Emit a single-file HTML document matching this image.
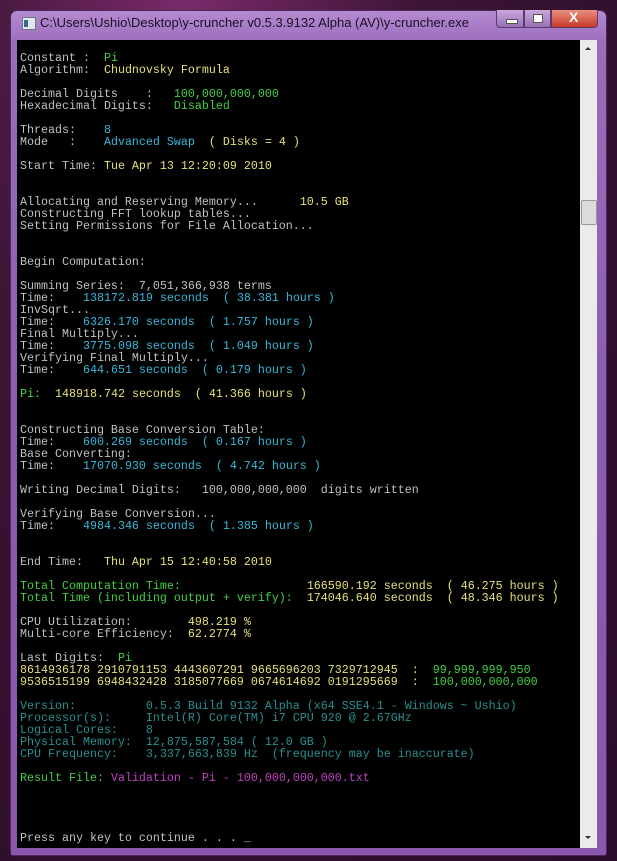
<!DOCTYPE html>
<html><head><meta charset="utf-8"><style>
html,body{margin:0;padding:0}
body{width:617px;height:861px;overflow:hidden;position:relative;background:radial-gradient(ellipse at 30% 0%,#7a2a6a 0%,#3a1434 40%,#2a0c28 100%)}
.win{position:absolute;left:10px;top:10px;width:597px;height:846px;border-radius:7px 7px 3px 3px;background:linear-gradient(180deg,#b48ad0 0%,#9a6cbc 4%,#8a5cae 50%,#8a56ae 100%);border:1px solid #4a2a5a;box-sizing:border-box}
.title{position:absolute;left:40px;top:15px;font:13px "Liberation Sans",sans-serif;color:#1a1024;white-space:nowrap}
.ico{position:absolute;left:22px;top:17px;width:12px;height:11px;background:#dfe7ee;border:1px solid #6a7a8a}
.ico:after{content:"";position:absolute;left:1px;top:2px;width:4px;height:7px;background:#3a6a8a}
.btn{position:absolute;top:10px;height:18px;border:1px solid #5a3a6a;border-top:none;box-sizing:border-box;background:linear-gradient(#c9a8dc,#9a70b8)}
.con{position:absolute;left:17px;top:40px;width:563px;height:808px;background:#000}
.sb{position:absolute;left:580px;top:40px;width:17px;height:808px;background:#ebebeb}
pre{position:absolute;left:20px;top:52px;margin:0;font:11.67px/12px "Liberation Mono",monospace;color:#c0c0c0}
.g{color:#44d044}.y{color:#e6e07a}.c{color:#38b8d8}.t{color:#2a9090}.m{color:#c040c0}.lg{color:#48c848}
</style></head><body>
<div class="win"></div>
<div class="ico"></div>
<div class="title">C:\Users\Ushio\Desktop\y-cruncher v0.5.3.9132 Alpha (AV)\y-cruncher.exe</div>
<div class="btn" style="left:496px;width:28px;border-radius:0 0 0 4px"><div style="position:absolute;left:9px;top:9px;width:10px;height:3px;background:#fff;border:1px solid #555"></div></div>
<div class="btn" style="left:524px;width:27px"><div style="position:absolute;left:8px;top:4px;width:8px;height:7px;border:1px solid #555;background:#fff"></div></div>
<div class="btn" style="left:551px;width:47px;border-radius:0 0 4px 0;background:linear-gradient(#e89080,#c83a28)"><div style="position:absolute;left:17px;top:-1px;color:#fff;font:bold 14px 'Liberation Sans',sans-serif">X</div></div>
<div class="con"></div>
<div class="sb"><div style="position:absolute;left:5px;top:7px;border:3px solid transparent;border-bottom:3px solid #333;border-top:0"></div><div style="position:absolute;left:1px;top:160px;width:14px;height:23px;background:#dcdcdc;border:1px solid #999;border-radius:2px"></div><div style="position:absolute;left:5px;bottom:9px;border:3px solid transparent;border-top:3px solid #333;border-bottom:0"></div></div>
<pre>Constant :  <span class="g">Pi</span>
Algorithm:  <span class="y">Chudnovsky Formula</span>

Decimal Digits    :   <span class="g">100,000,000,000</span>
Hexadecimal Digits:   <span class="g">Disabled</span>

Threads:    <span class="c">8</span>
Mode   :    <span class="c">Advanced Swap</span>  <span class="y">( Disks = 4 )</span>

Start Time: <span class="y">Tue Apr 13 12:20:09 2010</span>


Allocating and Reserving Memory...      <span class="y">10.5 GB</span>
Constructing FFT lookup tables...
Setting Permissions for File Allocation...


Begin Computation:

Summing Series:  7,051,366,938 terms
Time:    <span class="c">138172.819 seconds  ( 38.381 hours )</span>
InvSqrt...
Time:    <span class="c">6326.170 seconds  ( 1.757 hours )</span>
Final Multiply...
Time:    <span class="c">3775.098 seconds  ( 1.049 hours )</span>
Verifying Final Multiply...
Time:    <span class="c">644.651 seconds  ( 0.179 hours )</span>

<span class="g">Pi:</span>  <span class="y">148918.742 seconds  ( 41.366 hours )</span>


Constructing Base Conversion Table:
Time:    <span class="c">600.269 seconds  ( 0.167 hours )</span>
Base Converting:
Time:    <span class="c">17070.930 seconds  ( 4.742 hours )</span>

Writing Decimal Digits:   100,000,000,000  digits written

Verifying Base Conversion...
Time:    <span class="c">4984.346 seconds  ( 1.385 hours )</span>


End Time:   <span class="y">Thu Apr 15 12:40:58 2010</span>

<span class="g">Total Computation Time:</span>                  <span class="y">166590.192 seconds  ( 46.275 hours )</span>
<span class="g">Total Time (including output + verify):</span>  <span class="y">174046.640 seconds  ( 48.346 hours )</span>

CPU Utilization:        <span class="y">498.219 %</span>
Multi-core Efficiency:  <span class="y">62.2774 %</span>

Last Digits:  <span class="g">Pi</span>
<span class="y">8614936178 2910791153 4443607291 9665696203 7329712945  :</span>  <span class="g">99,999,999,950</span>
<span class="y">9536515199 6948432428 3185077669 0674614692 0191295669  :</span>  <span class="g">100,000,000,000</span>

<span class="t">Version:          0.5.3 Build 9132 Alpha (x64 SSE4.1 - Windows ~ Ushio)
Processor(s):     Intel(R) Core(TM) i7 CPU 920 @ 2.67GHz
Logical Cores:    8
Physical Memory:  12,875,587,584 ( 12.0 GB )
CPU Frequency:    3,337,663,839 Hz  (frequency may be inaccurate)</span>

<span class="lg">Result File:</span> <span class="m">Validation - Pi - 100,000,000,000.txt</span>




Press any key to continue . . . _</pre>
</body></html>
